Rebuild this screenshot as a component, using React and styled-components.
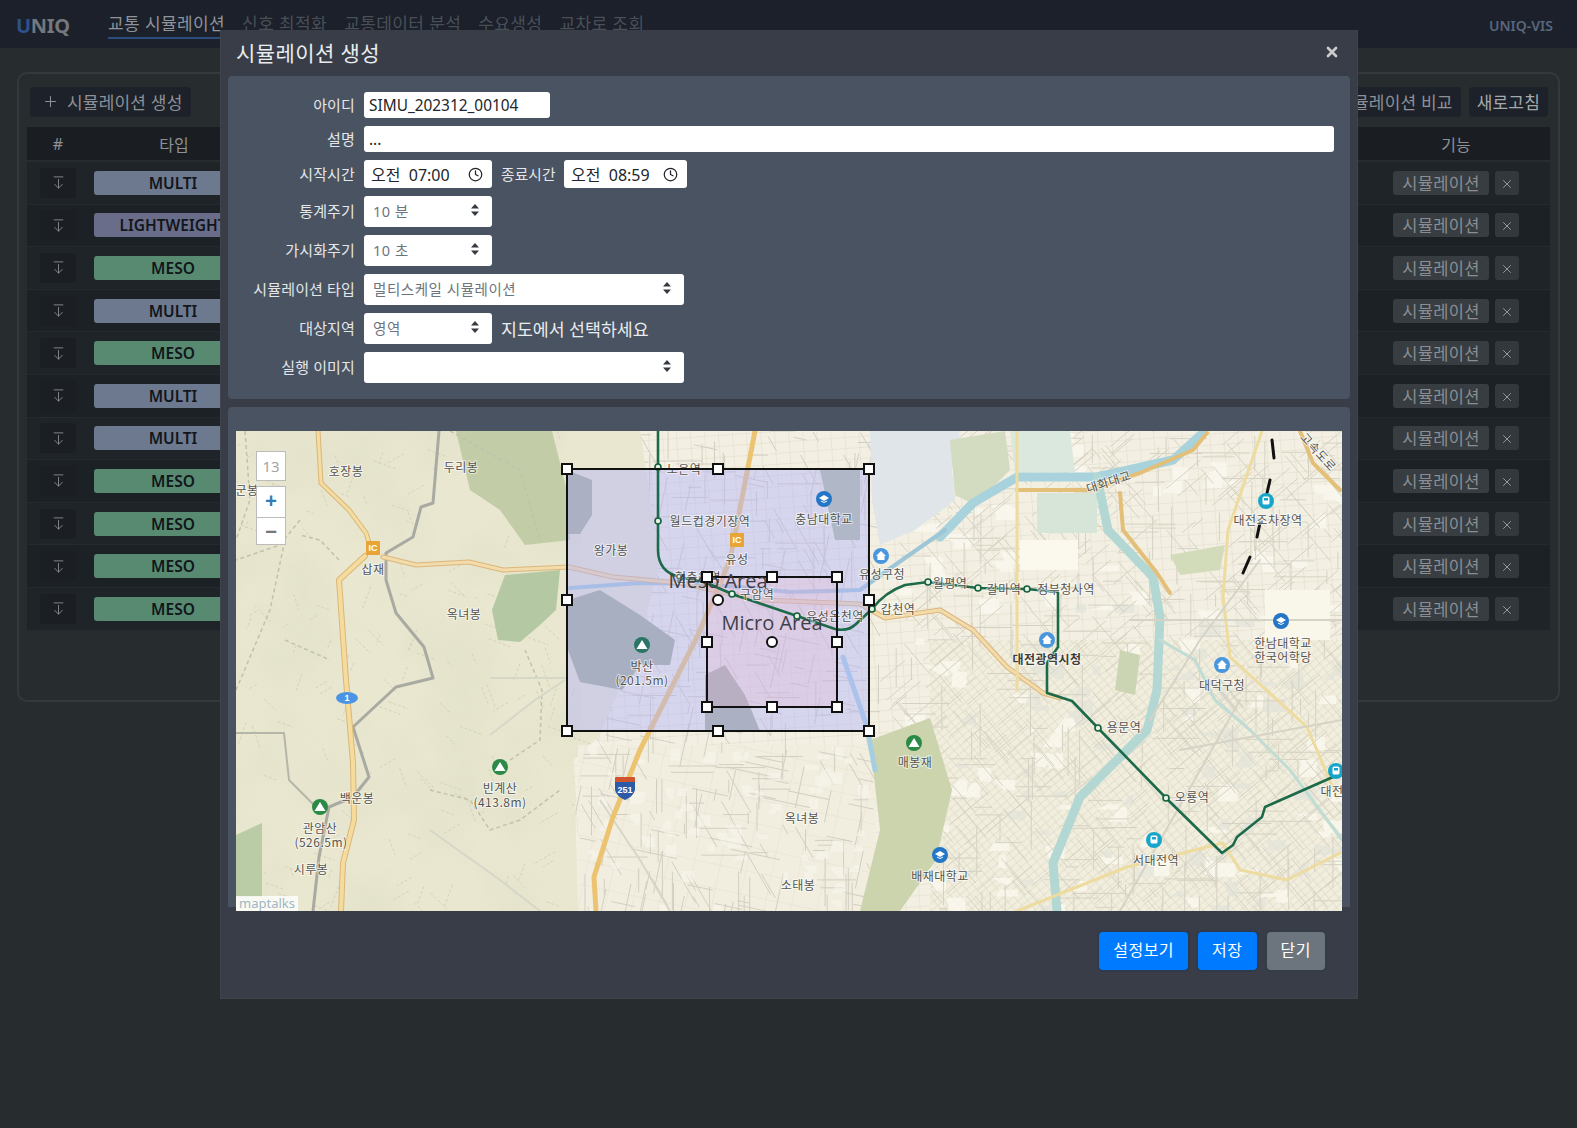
import React from "react"
import styled, { createGlobalStyle } from "styled-components"
import { ArrowDownFromLine, Clock, Plus, X } from "lucide-react"

const GlobalStyle = createGlobalStyle`
  html, body { margin: 0; padding: 0; background: #272c2f; }
  body { font-family: "Noto Sans", "Noto Sans CJK KR", sans-serif; font-size: 16px; }
  * { box-sizing: border-box; }
`

const rows = ["MULTI", "LIGHTWEIGHT", "MESO", "MULTI", "MESO", "MULTI", "MULTI", "MESO", "MESO", "MESO", "MESO"]
const typeColors = { MULTI: "#6c798f", LIGHTWEIGHT: "#6a6d8a", MESO: "#578a71" }
const navLinks = ["교통 시뮬레이션", "신호 최적화", "교통데이터 분석", "수요생성", "교차로 조회"]

const Page = styled.div`
  position: relative;
  width: 1577px;
  height: 1128px;
  overflow: hidden;
  background: #272c2f;
`
const Nav = styled.nav`
  height: 48px;
  background: #1b202b;
  display: flex;
  align-items: center;
  padding: 0 24px 0 16px;
`
const Logo = styled.div`
  width: 92px;
  margin-top: 2px;
  font-size: 20px;
  font-weight: 700;
  color: #73787e;
  letter-spacing: -0.3px;
  span { color: #2f5088; }
`
const NavLinks = styled.div`
  display: flex;
  gap: 17px;
  flex: 1;
`
const NavLink = styled.div`
  font-size: 17px;
  letter-spacing: 0.4px;
  line-height: 27px;
  color: ${(p) => (p.$active ? "#8f949a" : "#4a4f57")};
  border-bottom: 2px solid ${(p) => (p.$active ? "#2b4d7d" : "transparent")};
`
const NavRight = styled.div`
  margin-top: 2px;
  font-size: 14px;
  font-weight: 600;
  color: #59667c;
`
const Main = styled.main`
  padding: 24px 17px 0;
`
const Panel = styled.section`
  height: 630px;
  border: 2px solid #34393e;
  border-radius: 10px;
  padding: 13px 8px;
`
const Toolbar = styled.div`
  display: flex;
  justify-content: space-between;
  padding: 0 2px 0 3px;
  height: 30px;
  margin-bottom: 10px;
`
const ToolGroup = styled.div`
  display: flex;
  gap: 8px;
`
const ToolButton = styled.div`
  display: flex;
  align-items: center;
  gap: 8px;
  height: 30px;
  padding: 0 8px 2px ${(p) => (p.$lead ? "12px" : "8px")};
  border-radius: 4px;
  background: #1d2129;
  color: ${(p) => (p.$bright ? "#a6a9ac" : "#8d9196")};
  font-size: 17px;
  letter-spacing: 0.2px;
`
const Head = styled.div`
  display: grid;
  grid-template-columns: 62px 170px 1fr 188px;
  height: 33px;
  margin-bottom: 2px;
  align-items: center;
  background: #1a1e22;
  color: #8d9196;
  font-size: 16px;
  text-align: center;
`
const Row = styled.div`
  display: grid;
  grid-template-columns: 62px 160px 1fr 188px;
  column-gap: 4px;
  height: 42.6px;
  align-items: center;
  background: ${(p) => (p.$odd ? "#1c2125" : "#1f2428")};
  border-bottom: 1px solid #262a2e;
`
const Cell = styled.div`
  display: flex;
  justify-content: center;
  gap: 6px;
`
const DownButton = styled.div`
  width: 36px;
  height: 30px;
  border-radius: 3px;
  background: #1b1f23;
  color: #8d9196;
  display: flex;
  align-items: center;
  justify-content: center;
`
const TypeBadge = styled.div`
  width: 158px;
  height: 24px;
  line-height: 24px;
  border-radius: 3px;
  text-align: center;
  font-size: 15.5px;
  font-weight: 600;
  color: #11161b;
  background: ${(p) => typeColors[p.$type]};
`
const RowButton = styled.div`
  height: 24px;
  width: ${(p) => (p.$small ? "24px" : "96px")};
  padding-top: ${(p) => (p.$small ? "2px" : "0")};
  border-radius: 3px;
  background: ${(p) => (p.$small ? "#33383c" : "#383d42")};
  color: ${(p) => (p.$small ? "#a2a6aa" : "#8a8e92")};
  font-size: 16.5px;
  letter-spacing: 0.3px;
  display: flex;
  align-items: center;
  justify-content: center;
`

const Modal = styled.div`
  position: absolute;
  left: 220px;
  top: 30px;
  width: 1138px;
  height: 969px;
  background: #383d47;
  border: 1px solid #3f444c;
  border-top: 0;
  display: flex;
  flex-direction: column;
`
const ModalHeader = styled.div`
  height: 46px;
  padding: 0 17px 3px 15px;
  display: flex;
  align-items: center;
  justify-content: space-between;
  color: #e9ecef;
  font-size: 21px;
  letter-spacing: 0.4px;
`
const CloseButton = styled.div`
  color: #c9cbcd;
  display: flex;
`
const FormPanel = styled.div`
  margin: 0 7px;
  padding: 16px 0;
  background: #4a5361;
  border-radius: 4px;
  display: flex;
  flex-direction: column;
  gap: 8px;
`
const FormRow = styled.div`
  display: flex;
  align-items: center;
  gap: 9px;
  padding-right: 16px;
`
const Label = styled.div`
  width: ${(p) => p.$width || "127px"};
  text-align: right;
  color: #e4e6e9;
  font-size: ${(p) => p.$size || "15px"};
  letter-spacing: 0.15px;
  padding-bottom: 2px;
  white-space: nowrap;
  flex: none;
`
const Input = styled.input`
  height: 26px;
  width: ${(p) => p.$width || "186px"};
  flex: ${(p) => (p.$grow ? "1" : "none")};
  border: 0;
  border-radius: 3px;
  padding: 0 5px;
  background: #fff;
  color: #212529;
  font-family: inherit;
  font-size: 15.4px;
`
const TimeBox = styled.div`
  height: 28px;
  width: ${(p) => p.$width};
  border-radius: 3px;
  background: #fff;
  color: #212529;
  display: flex;
  align-items: center;
  justify-content: space-between;
  padding: 0 9px 0 7px;
  font-size: 16px;
  white-space: pre;
`
const SelectBox = styled.div`
  height: 31px;
  width: ${(p) => p.$width};
  border-radius: 3px;
  background: #fff;
  color: #6c757d;
  display: flex;
  align-items: center;
  justify-content: space-between;
  padding: 0 13px 3px 9px;
  font-size: 14.5px;
  letter-spacing: 0.55px;
`
const Hint = styled.div`
  color: #e9ecef;
  font-size: 17.3px;
`
const MapPanel = styled.div`
  margin: 8px 7px 0;
  padding: 24px 8px 0;
  height: 500px;
  background: #4a5361;
  border-radius: 4px 4px 0 0;
`
const MapFrame = styled.div`
  position: relative;
  width: 1106px;
  height: 480px;
  overflow: hidden;
`
const MapSvg = styled.svg`
  display: block;
  text {
    font-family: "Noto Sans CJK KR", sans-serif;
    font-size: 12px;
    letter-spacing: 0.5px;
    fill: #55554f;
    text-anchor: middle;
    stroke: rgba(255, 255, 255, 0.6);
    stroke-width: 2px;
    paint-order: stroke;
  }
  text.bold { font-weight: 700; fill: #3d3d3a; }
  text.shape {
    font-family: "Open Sans", sans-serif;
    font-size: 20px;
    letter-spacing: 0;
    fill: #3f3f48;
    stroke: none;
  }
  text.plain { stroke: none; fill: #fff; font-weight: 700; font-size: 9px; font-family: "Liberation Sans", sans-serif; letter-spacing: 0; }
`
const ZoomLevel = styled.div`
  position: absolute;
  left: 20px;
  top: 20px;
  width: 30px;
  height: 30px;
  background: #fff;
  border: 1px solid #bcbcbc;
  color: #a5a5a5;
  font-size: 15px;
  display: flex;
  align-items: center;
  justify-content: center;
`
const ZoomButtons = styled.div`
  position: absolute;
  left: 20px;
  top: 55px;
  width: 30px;
  height: 59px;
  background: #fff;
  border: 1px solid #bcbcbc;
  display: flex;
  flex-direction: column;
`
const ZoomButton = styled.div`
  flex: 1;
  display: flex;
  align-items: center;
  justify-content: center;
  padding-bottom: ${(p) => p.$lift};
  font-size: 21px;
  font-weight: 700;
  line-height: 1;
  color: ${(p) => p.$color};
  & + & { border-top: 1px solid #bcbcbc; }
`
const Attribution = styled.div`
  position: absolute;
  left: 0;
  bottom: 0;
  padding: 0 3px;
  height: 15px;
  line-height: 15px;
  background: rgba(255, 255, 255, 0.8);
  color: #9db7c2;
  font-size: 13px;
`
const Footer = styled.div`
  display: flex;
  justify-content: flex-end;
  gap: 10px;
  padding: 25px 32px 0 0;
`
const FooterButton = styled.div`
  height: 38px;
  line-height: 37px;
  padding: 0 14px;
  border-radius: 4px;
  color: #fff;
  font-size: 16px;
  letter-spacing: 0.5px;
  background: ${(p) => (p.$gray ? "#6c757d" : "#007bff")};
  box-shadow: 0 0 0 2px ${(p) => (p.$gray ? "#343c48" : "#2f3a4c")};
`

const labels = [
  ["호장봉", 346, 476], ["두리봉", 461, 472], ["군봉", 247, 495], ["왕가봉", 611, 555], ["옥녀봉", 464, 619],
  ["삽재", 373, 574], ["백운봉", 357, 803], ["관암산", 320, 833], ["(526.5m)", 321, 847], ["빈계산", 500, 793],
  ["(413.8m)", 500, 807], ["시루봉", 311, 874], ["박산", 642, 671], ["(201.5m)", 642, 685], ["충남대학교", 824, 524],
  ["유성", 737, 564], ["유성구청", 882, 579], ["갑천역", 898, 614], ["대전조차장역", 1268, 525], ["매봉재", 915, 767],
  ["옥녀봉", 802, 823], ["소태봉", 798, 890], ["배재대학교", 940, 881], ["서대전역", 1156, 865], ["용문역", 1124, 732],
  ["오룡역", 1192, 802], ["대덕구청", 1222, 690], ["한남대학교", 1283, 648], ["한국어학당", 1283, 662], ["대전", 1332, 796],
  ["월평역", 950, 588], ["갈마역", 1004, 594], ["정부청사역", 1066, 594], ["노은역", 684, 474], ["월드컵경기장역", 710, 526],
  ["현충원역", 698, 582], ["구암역", 757, 599], ["유성온천역", 835, 621],
]
const stations = [
  [658, 467], [658, 521], [680, 577], [732, 594], [797, 616], [872, 609], [928, 582], [978, 588], [1027, 589], [1098, 728], [1166, 798],
]
const mountains = [[320, 807, "#2b8a46"], [500, 767, "#2b8a46"], [642, 645, "#2a7565"], [914, 743, "#2b8a46"]]
const schools = [[824, 499], [1281, 621], [940, 855]]
const offices = [[881, 556], [1047, 640], [1222, 665]]
const railStops = [[1266, 501], [1154, 840], [1336, 771]]

const mesoHandles = [[567, 469], [718, 469], [869, 469], [567, 600], [869, 600], [567, 731], [718, 731], [869, 731]]
const microHandles = [[707, 577], [772, 577], [837, 577], [707, 642], [837, 642], [707, 707], [772, 707], [837, 707]]

const metroLine = "M658 431V550Q658 572 680 577L707 583L732 594L797 616L835 629Q848 632 856 624L872 609Q885 592 905 585L928 582L978 588L1027 589L1058 592V647L1047 663V693L1072 701L1098 728L1166 798L1222 853L1233 845L1237 837L1262 817L1265 807L1342 773"

// deterministic scatter so the city and hill texture stays the same on each run
let seed = 7
const rand = () => {
  seed = (seed * 16807) % 2147483647
  return seed / 2147483647
}
function scatterLines(count, x0, y0, w, h, angles, minLen, maxLen) {
  let d = ""
  for (let i = 0; i < count; i++) {
    const x = x0 + rand() * w
    const y = y0 + rand() * h
    const a = (angles[Math.floor(rand() * angles.length)] * Math.PI) / 180
    const len = minLen + rand() * (maxLen - minLen)
    d += `M${x.toFixed(1)} ${y.toFixed(1)}l${(Math.cos(a) * len).toFixed(1)} ${(Math.sin(a) * len).toFixed(1)}`
  }
  return d
}
function scatterBlocks(count, x0, y0, w, h, size) {
  let d = ""
  for (let i = 0; i < count; i++) {
    const x = x0 + rand() * w
    const y = y0 + rand() * h
    d += `M${x.toFixed(1)} ${y.toFixed(1)}h${(4 + rand() * size).toFixed(1)}v${(4 + rand() * size * 0.7).toFixed(1)}h${(-4 - rand() * size).toFixed(1)}z`
  }
  return d
}
const cityStreets = scatterLines(800, 880, 431, 462, 480, [-40, 50, -40, 50, 0, 90], 12, 55)
const townStreets = scatterLines(360, 580, 431, 300, 480, [0, 90, 12, 102, 60], 10, 50)
const hillTrails = scatterLines(150, 236, 431, 340, 480, [70, 110, 20, 150, 45], 6, 26)
const paleBlocks = scatterBlocks(110, 880, 431, 462, 480, 20)
const greyBlocks = scatterBlocks(60, 930, 600, 412, 310, 20)
const townBlocks = scatterBlocks(70, 580, 740, 290, 170, 12)

function DownIcon() {
  return <ArrowDownFromLine size={15} strokeWidth={1.4} />
}

function SelectArrows() {
  return (
    <svg width="8" height="12" viewBox="0 0 8 12">
      <path d="M4 0L8 4.5H0ZM4 12L0 7.5H8Z" fill="#343a40" />
    </svg>
  )
}

function MapDrawing() {
  return (
    <MapSvg width="1106" height="480" viewBox="236 431 1106 480">
      <defs>
        <pattern id="blocks" width="8" height="6" patternUnits="userSpaceOnUse" patternTransform="rotate(-40)">
          <rect width="8" height="6" fill="#f2eedd" />
          <path d="M0 0H8M0 0V6" stroke="#d9d5c6" strokeWidth="1" />
        </pattern>
        <pattern id="grid" width="14" height="11" patternUnits="userSpaceOnUse" patternTransform="rotate(-4)">
          <rect width="14" height="11" fill="#f3f0e3" />
          <path d="M0 0H14M0 0V11" stroke="#dfdbca" strokeWidth="1" />
        </pattern>
        <pattern id="town" width="26" height="24" patternUnits="userSpaceOnUse" patternTransform="rotate(12)">
          <rect width="26" height="24" fill="#f1eedf" />
          <path d="M0 0H26M0 0V24" stroke="#e4e1d3" strokeWidth="1" />
        </pattern>
        <filter id="mottle" x="0" y="0" width="100%" height="100%">
          <feTurbulence type="fractalNoise" baseFrequency="0.012" numOctaves="4" seed="5" />
          <feColorMatrix type="matrix" values="0 0 0 0 0.62  0 0 0 0 0.63  0 0 0 0 0.48  0 0 0 1.3 -0.5" />
        </filter>
        <clipPath id="cityClip">
          <path d="M870 431H1342V911H940L870 740Z" />
        </clipPath>
        <clipPath id="townClip">
          <path d="M640 431H880V911H578L574 760L600 735L640 640L660 560Z" />
        </clipPath>
        <clipPath id="hillClip">
          <path d="M236 431H640L660 560L640 640L600 735L574 760L578 911H236Z" />
        </clipPath>
      </defs>

      {/* terrain and city blocks */}
      <rect x="236" y="431" width="1106" height="480" fill="#e9e7cf" />
      <rect x="236" y="431" width="345" height="480" filter="url(#mottle)" opacity="0.35" />
      <path d="M640 431H1342V911H578L574 760L600 735L640 640L660 560Z" fill="url(#grid)" />
      <path d="M578 745H880L870 911H578Z" fill="url(#town)" />
      <path d="M930 640H1342V911H930Z" fill="url(#blocks)" />
      <path d="M1180 500L1342 440V640H1170Z" fill="url(#grid)" />
      <g clipPath="url(#hillClip)">
        <path d={hillTrails} stroke="#d3d2ba" strokeWidth="1" fill="none" strokeDasharray="3 2" />
      </g>
      <g clipPath="url(#townClip)">
        <path d={townStreets} stroke="#d2cfc2" strokeWidth="1" fill="none" />
        <path d={townBlocks} fill="#fbf9f1" opacity="0.45" />
      </g>
      <g clipPath="url(#cityClip)">
        <path d={paleBlocks} fill="#fbf9f0" opacity="0.75" />
        <path d={greyBlocks} fill="#e3e2da" opacity="0.7" />
        <path d={cityStreets} stroke="#d6d2c3" strokeWidth="1" fill="none" />
      </g>
      <path d="M456 431H552L566 487L570 540L525 545L500 510L470 490Z" fill="#c2cda8" />
      <path d="M505 575L560 570L556 610L540 625L520 642L498 640L492 610Z" fill="#b4c9a3" />
      <path d="M236 835L262 823V897H236Z" fill="#b9cca6" />
      <path d="M567 470L592 480L592 515L580 534L567 534Z" fill="#a4b095" />
      <path d="M568 600L600 590L640 615L675 640L670 665L640 665L622 690L580 682L568 650Z" fill="#9dab90" />
      <path d="M705 675L725 665L745 695L760 731H705Z" fill="#a4b095" />
      <path d="M870 740L930 718L952 790L936 860L900 911H860L880 830Z" fill="#cbd4ad" />
      <path d="M820 470L860 470L860 540L835 540Z" fill="#aebc9d" />
      <path d="M870 431H960L952 470L955 500L915 530L880 545L872 500Z" fill="#dfe5e8" />
      <path d="M950 440L1005 431L1010 470L975 505L955 495Z" fill="#d3dcc0" />
      <path d="M1037 493H1097V533H1037Z" fill="#d7e5d9" />
      <path d="M1020 540H1078V570H1020Z" fill="#fbf8ee" />
      <path d="M1010 431H1070L1075 472H1015Z" fill="#dbe8de" />
      <path d="M1170 555L1225 545L1220 570L1180 575Z" fill="#d3dcba" />
      <path d="M1120 650L1140 655L1135 695L1115 690Z" fill="#ccd5b3" />
      <path d="M1265 590H1330V640H1265Z" fill="#f9f6ea" />

      {/* rivers */}
      <g fill="none" stroke="#a8d2dc" strokeLinecap="round" strokeLinejoin="round">
        <path d="M940 537L973 503L1017 477H1097L1173 460L1203 433" strokeWidth="9" />
        <path d="M1097 477L1108 530L1153 577L1160 617L1157 690L1147 730L1120 757L1080 797L1053 863L1057 911" strokeWidth="9" stroke="#b3d8d4" />
        <path d="M570 588L640 583L707 584L790 592L860 590L895 565L945 530" strokeWidth="4" stroke="#9fc6d6" />
        <path d="M843 657L867 727L875 770" strokeWidth="5" stroke="#a5cfe0" />
        <path d="M1160 640L1195 660L1215 700L1250 730L1290 770L1342 840" strokeWidth="3" stroke="#c0dcd4" />
      </g>

      {/* terrain boundaries and trails */}
      <g fill="none" stroke="#a9aaa2" strokeWidth="3" strokeLinejoin="round">
        <path d="M439 431L433 503L421 507L413 537L386 553V580L396 613L424 647L433 678L396 687L353 727L369 777L353 797L329 807L319 857L313 911" />
        <path d="M236 733H284L289 780L316 807" strokeWidth="2" stroke="#b5b6aa" />
      </g>
      <g fill="none" stroke="#c2c1ab" strokeWidth="1.5" strokeDasharray="4 3">
        <path d="M245 431L250 500L236 540M300 520L280 545L236 560M339 560L320 540L300 535" />
        <path d="M285 640L330 660M236 690L270 610L285 540" />
        <path d="M430 790L470 800L490 830L520 820L560 790M510 760L540 740L542 690L525 650" />
        <path d="M450 431L520 470L540 540" />
      </g>
      <g fill="none" stroke="#d6d7c8" strokeWidth="2">
        <path d="M490 735L535 700L565 680M490 678H567" />
        <path d="M600 800L640 860L670 911M430 830L500 880L540 911" />
      </g>

      {/* roads */}
      <g fill="none" strokeLinecap="round" strokeLinejoin="round">
        <path d="M318 431L321 483L349 510L366 533L372 552" stroke="#d9b77a" strokeWidth="5" />
        <path d="M318 431L321 483L349 510L366 533L372 552" stroke="#f5dca0" strokeWidth="3" />
        <path d="M365 556L339 580L346 680L353 763L354 820L343 863L341 911" stroke="#d9b77a" strokeWidth="6" />
        <path d="M365 556L339 580L346 680L353 763L354 820L343 863L341 911" stroke="#f6dc9c" strokeWidth="4" />
        <path d="M383 557L416 565L469 562L503 570L569 567L613 577L680 583L760 600L860 604L885 618L940 610L973 630L1007 667L1043 693L1060 698" stroke="#dcb67c" strokeWidth="5" />
        <path d="M383 557L416 565L469 562L503 570L569 567L613 577L680 583L760 600L860 604L885 618L940 610L973 630L1007 667L1043 693L1060 698" stroke="#f3dcab" strokeWidth="3" />
        <path d="M755 431L730 560L697 637L640 750L613 817L594 877L596 911" stroke="#ecc371" strokeWidth="5" />
        <path d="M1017 490H1090L1140 473L1193 450L1207 433M1120 493L1123 530L1157 573L1170 593M1300 431L1313 463L1340 490" stroke="#e3bf78" strokeWidth="4" />
        <path d="M1262 431L1228 530L1223 597L1230 657L1307 727L1337 797M1017 911L1127 867L1223 843L1240 870L1287 880L1340 853M1017 431V690" stroke="#eddb9f" strokeWidth="3" />
        <path d="M1130 620L1342 620M1180 750L1342 720M1260 560L1200 640L1150 720M1240 700L1120 911" stroke="#d6d3c6" strokeWidth="2" />
      </g>

      <rect x="567" y="469" width="302" height="262" fill="rgba(180,180,250,0.45)" />
      <rect x="707" y="577" width="130" height="130" fill="rgba(255,170,190,0.16)" />

      {/* rail and metro */}
      <path d="M1272 440L1274 458M1270 480L1267 493M1260 523L1257 537M1250 557L1243 573" stroke="#111" strokeWidth="3" strokeLinecap="round" fill="none" />
      <path d={metroLine} fill="none" stroke="#1c6a4a" strokeWidth="2.6" strokeLinejoin="round" />
      {stations.map(([x, y]) => (
        <circle key={`${x}-${y}`} cx={x} cy={y} r="3" fill="#e4f1e4" stroke="#14603d" strokeWidth="1.6" />
      ))}

      {/* point icons */}
      {mountains.map(([x, y, color]) => (
        <g key={x}>
          <circle cx={x} cy={y} r="8" fill={color} />
          <path d={`M${x} ${y - 5}L${x + 5.5} ${y + 4}H${x - 5.5}Z`} fill="#fff" />
        </g>
      ))}
      {schools.map(([x, y]) => (
        <g key={x}>
          <circle cx={x} cy={y} r="8" fill="#2476c6" />
          <path d={`M${x - 5} ${y - 1}L${x} ${y - 4}L${x + 5} ${y - 1}L${x} ${y + 2}Z`} fill="#fff" />
          <path d={`M${x - 3} ${y + 2}Q${x} ${y + 5} ${x + 3} ${y + 2}`} stroke="#fff" fill="none" />
        </g>
      ))}
      {offices.map(([x, y]) => (
        <g key={x}>
          <circle cx={x} cy={y} r="8" fill="#4a97dd" />
          <path d={`M${x} ${y - 5}L${x + 5} ${y}H${x + 3.5}V${y + 4}H${x - 3.5}V${y}H${x - 5}Z`} fill="#fff" />
        </g>
      ))}
      {railStops.map(([x, y]) => (
        <g key={x}>
          <circle cx={x} cy={y} r="8" fill="#17a5c9" />
          <rect x={x - 3.5} y={y - 4.5} width="7" height="8" rx="1.5" fill="#fff" />
          <rect x={x - 2} y={y - 3} width="4" height="2.5" fill="#17a5c9" />
        </g>
      ))}
      {[[373, 548], [737, 540]].map(([x, y]) => (
        <g key={x}>
          <rect x={x - 7} y={y - 7} width="14" height="14" rx="1" fill="#e8a535" />
          <text className="plain" x={x} y={y + 3}>IC</text>
        </g>
      ))}
      <ellipse cx="347" cy="698" rx="11" ry="6" fill="#4a94e6" />
      <text className="plain" x="347" y="701">1</text>
      <path d="M615 780H635V790Q633 797 625 800Q617 797 615 790Z" fill="#2b5aa8" />
      <rect x="615" y="777" width="20" height="5" rx="1" fill="#d0552c" />
      <text className="plain" x="625" y="793">251</text>

      {labels.map(([name, x, y]) => (
        <text key={`${name}-${x}`} x={x} y={y}>{name}</text>
      ))}
      <text className="bold" x="1047" y="664">대전광역시청</text>
      <text x="1110" y="486" transform="rotate(-18 1110 486)">대화대교</text>
      <text x="1315" y="455" transform="rotate(48 1315 455)">고속도로</text>

      {/* drawn areas */}
      <rect x="567" y="469" width="302" height="262" fill="none" stroke="#111" strokeWidth="2" />
      <rect x="707" y="577" width="130" height="130" fill="none" stroke="#111" strokeWidth="2" />
      <text className="shape" x="718" y="588">Meso Area</text>
      <text className="shape" x="772" y="630">Micro Area</text>
      {[...mesoHandles, ...microHandles].map(([x, y]) => (
        <rect key={`${x}-${y}`} x={x - 5} y={y - 5} width="10" height="10" fill="#fff" stroke="#111" strokeWidth="2" />
      ))}
      {[[718, 600], [772, 642]].map(([x, y]) => (
        <circle key={x} cx={x} cy={y} r="5" fill="#fff" stroke="#111" strokeWidth="2" />
      ))}
    </MapSvg>
  )
}

export default function App() {
  return (
    <>
      <GlobalStyle />
      <Page>
        <Nav>
          <Logo><span>U</span>NIQ</Logo>
          <NavLinks>
            {navLinks.map((link, i) => (
              <NavLink key={link} $active={i === 0}>{link}</NavLink>
            ))}
          </NavLinks>
          <NavRight>UNIQ-VIS</NavRight>
        </Nav>
        <Main>
          <Panel>
            <Toolbar>
              <ToolButton $lead><Plus size={17} strokeWidth={1.5} />시뮬레이션 생성</ToolButton>
              <ToolGroup>
                <ToolButton>시뮬레이션 비교</ToolButton>
                <ToolButton $bright>새로고침</ToolButton>
              </ToolGroup>
            </Toolbar>
            <Head>
              <div>#</div>
              <div>타입</div>
              <div />
              <div>기능</div>
            </Head>
            {rows.map((type, i) => (
              <Row key={i} $odd={i % 2 === 1}>
                <Cell><DownButton><DownIcon /></DownButton></Cell>
                <Cell><TypeBadge $type={type}>{type}</TypeBadge></Cell>
                <div />
                <Cell>
                  <RowButton>시뮬레이션</RowButton>
                  <RowButton $small><X size={14} strokeWidth={1.5} /></RowButton>
                </Cell>
              </Row>
            ))}
          </Panel>
        </Main>

        <Modal>
          <ModalHeader>
            시뮬레이션 생성
            <CloseButton><X size={16} strokeWidth={4} /></CloseButton>
          </ModalHeader>
          <FormPanel>
            <FormRow>
              <Label>아이디</Label>
              <Input readOnly value="SIMU_202312_00104" />
            </FormRow>
            <FormRow>
              <Label>설명</Label>
              <Input readOnly value="..." $grow />
            </FormRow>
            <FormRow>
              <Label>시작시간</Label>
              <TimeBox $width="128px">오전  07:00<Clock size={15} strokeWidth={2} /></TimeBox>
              <Label $width="54px" $size="14.7px">종료시간</Label>
              <TimeBox $width="123px">오전  08:59<Clock size={15} strokeWidth={2} /></TimeBox>
            </FormRow>
            <FormRow>
              <Label>통계주기</Label>
              <SelectBox $width="128px">10 분<SelectArrows /></SelectBox>
            </FormRow>
            <FormRow>
              <Label>가시화주기</Label>
              <SelectBox $width="128px">10 초<SelectArrows /></SelectBox>
            </FormRow>
            <FormRow>
              <Label>시뮬레이션 타입</Label>
              <SelectBox $width="320px">멀티스케일 시뮬레이션<SelectArrows /></SelectBox>
            </FormRow>
            <FormRow>
              <Label>대상지역</Label>
              <SelectBox $width="128px">영역<SelectArrows /></SelectBox>
              <Hint>지도에서 선택하세요</Hint>
            </FormRow>
            <FormRow>
              <Label>실행 이미지</Label>
              <SelectBox $width="320px"><span /><SelectArrows /></SelectBox>
            </FormRow>
          </FormPanel>
          <MapPanel>
            <MapFrame>
              <MapDrawing />
              <ZoomLevel>13</ZoomLevel>
              <ZoomButtons>
                <ZoomButton $color="#2f7fb5" $lift="4px">+</ZoomButton>
                <ZoomButton $color="#777" $lift="0">−</ZoomButton>
              </ZoomButtons>
              <Attribution>maptalks</Attribution>
            </MapFrame>
          </MapPanel>
          <Footer>
            <FooterButton>설정보기</FooterButton>
            <FooterButton>저장</FooterButton>
            <FooterButton $gray>닫기</FooterButton>
          </Footer>
        </Modal>
      </Page>
    </>
  )
}
